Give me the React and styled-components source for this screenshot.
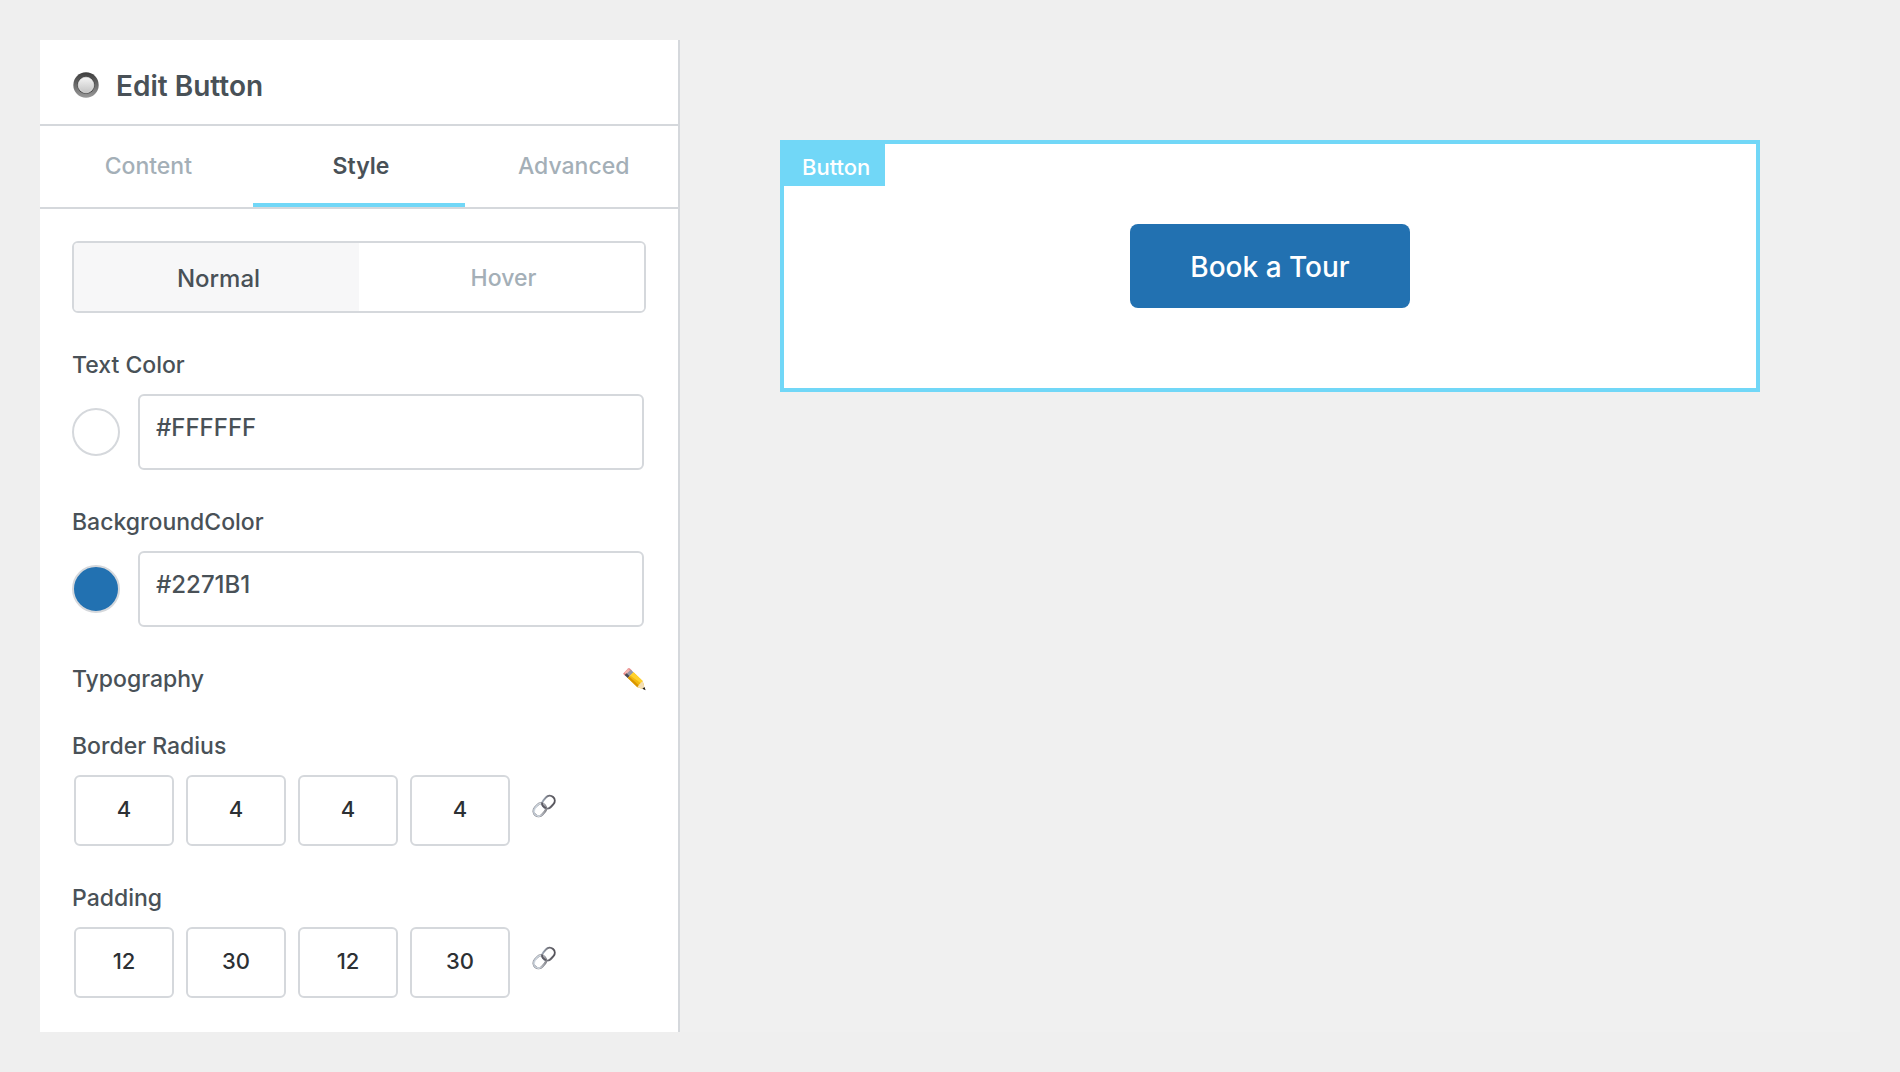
import React, { useState } from "react";
import styled, { createGlobalStyle } from "styled-components";

const c = {
  page: "#efefef",
  canvas: "#f0f0f0",
  line: "#d5d8dc",
  text: "#495157",
  muted: "#a4afb7",
  number: "#2c3034",
  sky: "#71d7f7",
  brand: "#2271b1",
};

const GlobalStyle = createGlobalStyle`
  *, *::before, *::after { box-sizing: border-box; }
  body {
    margin: 0;
    background: ${c.page};
    color: ${c.text};
    font-family: Inter, "Liberation Sans", sans-serif;
  }
  button, input { font: inherit; color: inherit; margin: 0; }
`;

const Page = styled.div`
  display: flex;
  min-height: 100vh;
  padding: 40px;
`;

const Panel = styled.aside`
  flex: 0 0 640px;
  background: #fff;
  border-right: 2px solid ${c.line};
`;

const Header = styled.header`
  display: flex;
  align-items: center;
  gap: 16px;
  padding: 28px 32px 20px;
  border-bottom: 2px solid ${c.line};
`;

const Title = styled.h1`
  margin: 0;
  font-size: 28px;
  line-height: 36px;
  font-weight: 600;
`;

const Tabs = styled.div`
  display: grid;
  grid-template-columns: repeat(3, 1fr);
  border-bottom: 2px solid ${c.line};
`;

const Tab = styled.button`
  padding: 25px 0 22px 4px;
  border: 0;
  border-bottom: 4px solid ${(p) => (p.$active ? c.sky : "transparent")};
  background: none;
  color: ${(p) => (p.$active ? c.text : c.muted)};
  font-size: 23px;
  line-height: 30px;
  font-weight: ${(p) => (p.$active ? 600 : 500)};
`;

const Body = styled.div`
  display: flex;
  flex-direction: column;
  gap: 37px;
  padding: 32px;
`;

const Toggle = styled.div`
  display: grid;
  grid-template-columns: 1fr 1fr;
  height: 72px;
  border: 2px solid ${c.line};
  border-radius: 6px;
  overflow: hidden;
`;

const ToggleOption = styled.button`
  padding: 2px 0 0 4px;
  border: 0;
  background: ${(p) => (p.$active ? "#f7f7f8" : "#fff")};
  color: ${(p) => (p.$active ? c.text : c.muted)};
  font-size: ${(p) => (p.$active ? "24px" : "23px")};
  font-weight: 500;
`;

const Field = styled.div`
  display: flex;
  flex-direction: column;
  gap: 14px;
`;

const Label = styled.label`
  font-size: 23px;
  line-height: 30px;
  font-weight: 500;
`;

const ColorRow = styled.div`
  display: flex;
  align-items: center;
  gap: 18px;
  padding-right: 2px;
`;

const Swatch = styled.button`
  flex: none;
  width: 48px;
  height: 48px;
  padding: 0;
  border: 2px solid ${c.line};
  border-radius: 50%;
  background: ${(p) => p.$color};
`;

const ColorInput = styled.input`
  flex: 1;
  min-width: 0;
  height: 76px;
  padding: 0 16px 9px;
  border: 2px solid ${c.line};
  border-radius: 6px;
  background: #fff;
  font-size: 24px;
  font-weight: 500;
`;

const InlineField = styled.div`
  display: flex;
  align-items: center;
  justify-content: space-between;
  height: 30px;
`;

const IconButton = styled.button`
  display: flex;
  padding: 0;
  border: 0;
  background: none;
`;

const Sides = styled.div`
  display: flex;
  align-items: center;
  gap: 12px;
  padding-left: 2px;

  ${IconButton} {
    margin: 0 0 10px 10px;
  }
`;

const SideInput = styled.input`
  width: 100px;
  height: 71px;
  padding: 0 0 3px;
  border: 2px solid ${c.line};
  border-radius: 6px;
  background: #fff;
  color: ${c.number};
  font-size: 22px;
  font-weight: 500;
  text-align: center;
`;

const Canvas = styled.main`
  flex: 1;
  min-width: 0;
  padding: 100px;
  background: ${c.canvas};
`;

const Widget = styled.section`
  position: relative;
  display: flex;
  justify-content: center;
  padding: 80px;
  border: 4px solid ${c.sky};
  background: #fff;
`;

const WidgetTag = styled.span`
  position: absolute;
  top: 0;
  left: 0;
  padding: 9px 15px 5px 18px;
  background: ${c.sky};
  color: #fff;
  font-size: 22px;
  line-height: 28px;
  font-weight: 500;
`;

const TourButton = styled.button`
  padding: 25px 60px 23px;
  border: 0;
  border-radius: 8px;
  background: ${c.brand};
  color: #fff;
  font-size: 28px;
  line-height: 36px;
  font-weight: 500;
`;

const RadioIcon = () => (
  <svg width="28" height="28" viewBox="0 0 28 28" aria-hidden="true">
    <defs>
      <linearGradient id="ring" x1="0" y1="0" x2="0" y2="1">
        <stop offset="0" stopColor="#3c3c3c" />
        <stop offset="1" stopColor="#9a9a9a" />
      </linearGradient>
      <linearGradient id="knob" x1="0" y1="0" x2="0" y2="1">
        <stop offset="0" stopColor="#f4f4f4" />
        <stop offset="1" stopColor="#c4c4c4" />
      </linearGradient>
    </defs>
    <circle cx="14" cy="13" r="12.7" fill="url(#ring)" />
    <circle cx="14" cy="13" r="8.8" fill="#484848" />
    <circle cx="14" cy="13" r="7.8" fill="url(#knob)" stroke="#f4f4f4" strokeWidth="0.6" />
  </svg>
);

const PencilIcon = () => (
  <svg width="24" height="24" viewBox="0 0 24 24" aria-hidden="true">
    <path d="M1.2 6.5 6 1.4Q7 .6 8.2 1.7L10 3.4 3.9 9.3 2 7.8Q1 7 1.2 6.5Z" fill="#e98b8b" />
    <path d="M2.5 5.6 6.2 2.1 8 3.7 4.2 7.3Z" fill="#f5b5b0" />
    <path d="M3 8.3 8.8 2.8 11.6 5.2 5.8 10.9Z" fill="#9699a6" />
    <path d="M2.6 8 4.6 6.3 7.4 9.1 5.8 10.9Z" fill="#4b4850" />
    <path d="M5.8 10.9 11.6 5.2 20.6 14.1 22.2 18.9 20.2 21.8 15.4 20.2Z" fill="#f2b90f" />
    <path d="M8.2 8.6 11.6 5.2 20.6 14.1 18.9 16.2Z" fill="#ffd22c" />
    <path d="M5.8 10.9 7.2 9.5 17 18.6 15.4 20.2Z" fill="#d99500" />
    <path d="M15.4 20.2 17.2 17.4 20.6 14.1 23.2 22.8Z" fill="#f4dfb4" />
    <path d="M20.4 21.8 22.5 20 23.6 23.2Z" fill="#1d1a18" />
  </svg>
);

const LinkIcon = ({ id }) => (
  <svg width="24" height="24" viewBox="0 0 24 24" fill="none" aria-hidden="true">
    <defs>
      <linearGradient id={`${id}-upper`} x1="0" y1="0" x2="1" y2="1">
        <stop offset="0" stopColor="#a9b6c6" />
        <stop offset="0.5" stopColor="#6c6c74" />
        <stop offset="1" stopColor="#4c4a50" />
      </linearGradient>
      <linearGradient id={`${id}-lower`} x1="0" y1="0" x2="1" y2="1">
        <stop offset="0" stopColor="#b4bcc7" />
        <stop offset="0.5" stopColor="#d2d9e0" />
        <stop offset="1" stopColor="#77767c" />
      </linearGradient>
    </defs>
    <rect x="9.7" y="3.1" width="13.6" height="10" rx="5" transform="rotate(-48 16.5 8.1)" stroke={`url(#${id}-upper)`} strokeWidth="2" />
    <rect x="1" y="10.8" width="13.6" height="10" rx="5" transform="rotate(-48 7.8 15.8)" stroke="#7d7d84" strokeWidth="2.2" />
    <rect x="1" y="10.8" width="13.6" height="10" rx="5" transform="rotate(-48 7.8 15.8)" stroke={`url(#${id}-lower)`} strokeWidth="1.6" />
    <path d="M10 8.6Q9.8 12.6 14.2 14" stroke="#5c5a62" strokeWidth="1.8" />
    <path d="M2.6 18.4Q2 15 5.2 12.2" stroke="#e4edf5" strokeWidth="0.8" />
  </svg>
);

function ColorField({ id, label, initial }) {
  const [value, setValue] = useState(initial);
  return (
    <Field>
      <Label htmlFor={id}>{label}</Label>
      <ColorRow>
        <Swatch type="button" $color={value} aria-label={`Pick ${label}`} />
        <ColorInput id={id} type="text" value={value} onChange={(e) => setValue(e.target.value)} />
      </ColorRow>
    </Field>
  );
}

const sideNames = ["top", "right", "bottom", "left"];

function SidesField({ id, label, initial }) {
  const [values, setValues] = useState(initial);
  const update = (index, next) => setValues(values.map((v, i) => (i === index ? next : v)));
  return (
    <Field>
      <Label htmlFor={`${id}-0`}>{label}</Label>
      <Sides>
        {values.map((value, i) => (
          <SideInput
            key={sideNames[i]}
            id={`${id}-${i}`}
            type="text"
            inputMode="numeric"
            aria-label={`${label} ${sideNames[i]}`}
            value={value}
            onChange={(e) => update(i, e.target.value)}
          />
        ))}
        <IconButton type="button" aria-label="Link values together">
          <LinkIcon id={id} />
        </IconButton>
      </Sides>
    </Field>
  );
}

export default function App() {
  const [tab, setTab] = useState("Style");
  const [mode, setMode] = useState("Normal");
  return (
    <>
      <GlobalStyle />
      <Page>
        <Panel>
          <Header>
            <RadioIcon />
            <Title>Edit Button</Title>
          </Header>
          <Tabs role="tablist">
            {["Content", "Style", "Advanced"].map((name) => (
              <Tab
                key={name}
                type="button"
                role="tab"
                aria-selected={tab === name}
                $active={tab === name}
                onClick={() => setTab(name)}
              >
                {name}
              </Tab>
            ))}
          </Tabs>
          <Body>
            <Toggle>
              {["Normal", "Hover"].map((name) => (
                <ToggleOption
                  key={name}
                  type="button"
                  aria-pressed={mode === name}
                  $active={mode === name}
                  onClick={() => setMode(name)}
                >
                  {name}
                </ToggleOption>
              ))}
            </Toggle>
            <ColorField id="text-color" label="Text Color" initial="#FFFFFF" />
            <ColorField id="background-color" label="BackgroundColor" initial="#2271B1" />
            <InlineField>
              <Label htmlFor="typography">Typography</Label>
              <IconButton id="typography" type="button">
                <PencilIcon />
              </IconButton>
            </InlineField>
            <SidesField id="border-radius" label="Border Radius" initial={["4", "4", "4", "4"]} />
            <SidesField id="padding" label="Padding" initial={["12", "30", "12", "30"]} />
          </Body>
        </Panel>
        <Canvas>
          <Widget>
            <WidgetTag>Button</WidgetTag>
            <TourButton type="button">Book a Tour</TourButton>
          </Widget>
        </Canvas>
      </Page>
    </>
  );
}
